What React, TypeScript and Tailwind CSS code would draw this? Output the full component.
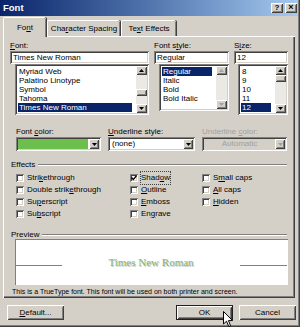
const SUNKEN = 'shadow-[inset_1px_1px_0_#808080,inset_-1px_-1px_0_#ffffff,inset_2px_2px_0_#404040,inset_-2px_-2px_0_#d4d0c8]';
const RAISED = 'shadow-[inset_1px_1px_0_#ffffff,inset_-1px_-1px_0_#404040,inset_2px_2px_0_#d4d0c8,inset_-2px_-2px_0_#808080]';

function Tri({ dir, disabled }: { dir: 'up' | 'down'; disabled?: boolean }) {
  return (
    <svg width="5" height="3" viewBox="0 0 5 3">
      <path d={dir === 'up' ? 'M2.5 0 L5 3 L0 3 Z' : 'M0 0 L5 0 L2.5 3 Z'} fill={disabled ? '#a0a0a0' : '#000'} />
    </svg>
  );
}

function ArrowBtn({ dir, disabled }: { dir: 'up' | 'down'; disabled?: boolean }) {
  return (
    <div className={`w-[11px] h-[9px] bg-[#d4d0c8] flex items-center justify-center ${RAISED}`}>
      <Tri dir={dir} disabled={disabled} />
    </div>
  );
}

// Vertical scrollbar: arrows, track, optional thumb
function ScrollBar({ thumbTop, disabled }: { thumbTop?: number; disabled?: boolean }) {
  return (
    <div className="w-[11px] flex flex-col">
      <ArrowBtn dir="up" disabled={disabled} />
      <div className="flex-1 flex flex-col bg-[#ebe9e4]">
        {thumbTop !== undefined && (
          <>
            <div style={{ height: thumbTop }} />
            <div className={`h-[7px] bg-[#d4d0c8] ${RAISED}`} />
          </>
        )}
      </div>
      <ArrowBtn dir="down" disabled={disabled} />
    </div>
  );
}

function ListBox({ items, selected, width, height, thumbTop, disabled }: {
  items: string[]; selected: string; width: number; height: number; thumbTop?: number; disabled?: boolean;
}) {
  return (
    <div className={`bg-white p-[2px] flex ${SUNKEN}`} style={{ width, height }}>
      <div className="flex-1 flex flex-col pt-px overflow-hidden">
        {items.map((it) => (
          <div key={it} className="h-[9px] leading-[9px] pl-px pr-[4px]">
            <span className={it === selected ? 'bg-[#0a246a] text-white inline-block w-full pl-px' : 'pl-px'}>{it}</span>
          </div>
        ))}
      </div>
      <ScrollBar thumbTop={thumbTop} disabled={disabled} />
    </div>
  );
}

function Field({ text, width }: { text: string; width: number }) {
  return (
    <div className={`h-[13px] bg-white leading-[13px] pl-[3px] ${SUNKEN}`} style={{ width }}>
      {text}
    </div>
  );
}

function Combo({ width, children, disabled }: { width: number; children: React.ReactNode; disabled?: boolean }) {
  return (
    <div className={`h-[14px] p-[2px] flex ${disabled ? 'bg-[#d4d0c8]' : 'bg-white'} ${SUNKEN}`} style={{ width }}>
      <div className="flex-1 flex">{children}</div>
      <div className={`w-[10px] bg-[#d4d0c8] flex items-center justify-center ${RAISED}`}>
        <Tri dir="down" disabled={disabled} />
      </div>
    </div>
  );
}

function Check({ label, u, checked }: { label: string; u: number; checked?: boolean }) {
  return (
    <div className="h-[12px] flex items-center">
      <div className={`w-[8px] h-[8px] bg-white flex items-center justify-center ${SUNKEN}`}>
        {checked && (
          <svg width="6" height="6" viewBox="0 0 6 6">
            <path d="M0.5 2.5 L2.3 4.5 L5.5 0.8" stroke="#000" strokeWidth="1.3" fill="none" />
          </svg>
        )}
      </div>
      <span className={`ml-[3px] ${checked ? 'outline outline-1 outline-dotted outline-[#404040]' : ''}`}>
        {label.slice(0, u)}
        <span className="underline">{label[u]}</span>
        {label.slice(u + 1)}
      </span>
    </div>
  );
}

function Lbl({ text, u, className = '' }: { text: string; u: number; className?: string }) {
  return (
    <div className={`h-[11px] leading-[11px] ${className}`}>
      {text.slice(0, u)}
      <span className="underline">{text[u]}</span>
      {text.slice(u + 1)}
    </div>
  );
}

function Button({ text, u, isDefault }: { text: string; u: number; isDefault?: boolean }) {
  return (
    <div className={`w-[57px] h-[15px] bg-[#d4d0c8] flex items-center justify-center ${isDefault ? 'border border-[#202020]' : ''} ${RAISED}`}>
      {u >= 0 ? (
        <span>
          {text.slice(0, u)}
          <span className="underline">{text[u]}</span>
          {text.slice(u + 1)}
        </span>
      ) : text}
    </div>
  );
}

function GroupLabel({ text, ml }: { text: string; ml: string }) {
  return (
    <div className={`flex items-center mr-[8px] ${ml}`}>
      <span>{text}</span>
      <div className="flex-1 ml-[3px] border-t border-t-[#808080] border-b border-b-white" />
    </div>
  );
}

export default function App() {
  return (
    <div className="relative w-[300px] h-[327px] bg-[#d4d0c8] overflow-hidden font-['Liberation_Sans',Arial,sans-serif] text-[8px] text-black shadow-[inset_-1px_-1px_0_#404040,inset_-2px_-2px_0_#808080]">
      {/* Title bar */}
      <div className="h-[16px] mr-[2px] flex items-center bg-gradient-to-r from-[#0a246a] to-[#a6caf0]">
        <span className="ml-[3px] text-white font-bold text-[9.5px]">Font</span>
        <div className="ml-auto mr-[1px] flex gap-[2px]">
          <div className={`w-[12px] h-[10px] bg-[#d4d0c8] flex items-center justify-center font-bold text-[8px] ${RAISED}`}>?</div>
          <div className={`w-[12px] h-[10px] bg-[#d4d0c8] flex items-center justify-center font-bold text-[9px] ${RAISED}`}>×</div>
        </div>
      </div>

      <div className="pl-[3px] pt-px">
        {/* Tabs */}
        <div className="h-[19px] flex items-end">
          <div className="relative z-10 -mb-px w-[43px] h-[20px] bg-[#d4d0c8] rounded-t-[2px] border-t border-l border-white shadow-[inset_-1px_0_0_#808080,1px_0_0_#404040] flex items-center justify-center">
            Fo<span className="underline">n</span>t
          </div>
          <div className="ml-px w-[73px] h-[16px] bg-[#d4d0c8] rounded-t-[2px] border-t border-l border-white shadow-[inset_-1px_0_0_#808080,1px_0_0_#404040] flex items-center justify-center">
            Cha<span className="underline">r</span>acter Spacing
          </div>
          <div className="ml-px w-[55px] h-[16px] bg-[#d4d0c8] rounded-t-[2px] border-t border-l border-white shadow-[inset_-1px_0_0_#808080,1px_0_0_#404040] flex items-center justify-center">
            Te<span className="underline">x</span>t Effects
          </div>
        </div>

        {/* Panel */}
        <div className="w-[292px] h-[262px] pt-[4px] shadow-[inset_1px_1px_0_#ffffff,inset_-1px_-1px_0_#404040,inset_-2px_-2px_0_#808080]">
          {/* Font / style / size */}
          <div className="flex items-start ml-[7px]">
            <div className="w-[139px] flex flex-col">
              <Lbl text="Font:" u={0} />
              <Field text="Times New Roman" width={139} />
              <div className="ml-[5px]">
                <ListBox
                  items={['Myriad Web', 'Palatino Linotype', 'Symbol', 'Tahoma', 'Times New Roman']}
                  selected="Times New Roman"
                  width={134}
                  height={51}
                  thumbTop={14}
                />
              </div>
            </div>
            <div className="ml-[5px] w-[75px] flex flex-col">
              <Lbl text="Font style:" u={6} />
              <Field text="Regular" width={75} />
              <div className="ml-[5px]">
                <ListBox items={['Regular', 'Italic', 'Bold', 'Bold Italic']} selected="Regular" width={70} height={47} disabled />
              </div>
            </div>
            <div className="ml-[5px] w-[54px] flex flex-col">
              <Lbl text="Size:" u={1} />
              <Field text="12" width={54} />
              <div className="ml-[4px]">
                <ListBox items={['8', '9', '10', '11', '12']} selected="12" width={50} height={51} thumbTop={0} />
              </div>
            </div>
          </div>

          {/* Colour / underline */}
          <div className="flex items-start ml-[13px] mt-[11px]">
            <div className="flex flex-col">
              <Lbl text="Font color:" u={5} />
              <Combo width={85}>
                <div className="flex-1 bg-[#6cbf4c] mr-px" />
              </Combo>
            </div>
            <div className="ml-[7px] flex flex-col">
              <Lbl text="Underline style:" u={0} />
              <Combo width={87}>
                <span className="leading-[10px] pl-[2px]">(none)</span>
              </Combo>
            </div>
            <div className="ml-[7px] flex flex-col">
              <Lbl text="Underline color:" u={10} className="text-[#a0a0a0]" />
              <Combo width={85} disabled>
                <span className="flex-1 text-center leading-[10px] text-[#a0a0a0]">Automatic</span>
              </Combo>
            </div>
          </div>

          {/* Effects */}
          <div className="mt-[9px] h-[10px] leading-[10px]">
            <GroupLabel text="Effects" ml="ml-[8px]" />
          </div>
          <div className="flex ml-[13px] mt-[2px]">
            <div className="w-[114px] flex flex-col">
              <Check label="Strikethrough" u={4} />
              <Check label="Double strikethrough" u={12} />
              <Check label="Superscript" u={2} />
              <Check label="Subscript" u={2} />
            </div>
            <div className="w-[72px] flex flex-col">
              <Check label="Shadow" u={4} checked />
              <Check label="Outline" u={0} />
              <Check label="Emboss" u={0} />
              <Check label="Engrave" u={2} />
            </div>
            <div className="flex flex-col">
              <Check label="Small caps" u={1} />
              <Check label="All caps" u={0} />
              <Check label="Hidden" u={0} />
            </div>
          </div>

          {/* Preview */}
          <div className="mt-[10px] h-[9px] leading-[9px]">
            <GroupLabel text="Preview" ml="ml-[8px]" />
          </div>
          <div className="ml-[12px] w-[273px] h-[46px] bg-white flex items-center shadow-[inset_1px_1px_0_#808080,inset_-1px_-1px_0_#ffffff]">
            <div className="ml-px w-[46px] h-px bg-[#808080] mt-[6px]" />
            <div className="flex-1 text-center font-['Liberation_Serif',serif] text-[11px] text-[#7fb96c] [text-shadow:1px_1px_0_#c8c8c8]">
              Times New Roman
            </div>
            <div className="mr-px w-[47px] h-px bg-[#808080] mt-[6px]" />
          </div>
          <div className="ml-[9px] mt-[2px] h-[10px] leading-[10px] text-[7px]">
            This is a TrueType font. This font will be used on both printer and screen.
          </div>
        </div>

        {/* Buttons */}
        <div className="mt-[7px] flex pl-[4px] pr-[4px]">
          <Button text="Default..." u={0} />
          <div className="flex-1" />
          <Button text="OK" u={-1} isDefault />
          <div className="w-[6px]" />
          <Button text="Cancel" u={-1} />
        </div>
      </div>

      {/* Mouse pointer over OK */}
      <svg className="absolute left-[223px] top-[311px]" width="11" height="17" viewBox="0 0 11 17">
        <path d="M0.5 0.5 L0.5 13 L3.5 10.2 L5.8 15.5 L7.6 14.7 L5.4 9.6 L9.5 9.6 Z" fill="#fff" stroke="#000" strokeWidth="1" />
      </svg>
    </div>
  );
}
